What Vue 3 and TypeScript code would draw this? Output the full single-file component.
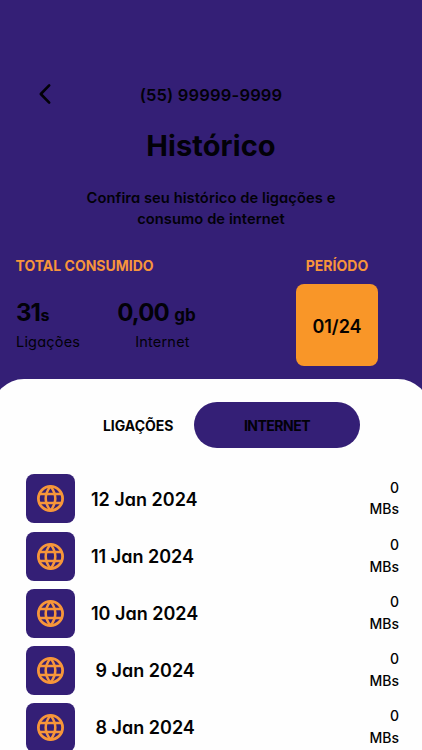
<script setup lang="ts">
interface UsageEntry {
  day: number
  month: string
  amount: number
  unit: string
}

const entries: UsageEntry[] = [12, 11, 10, 9, 8].map((day) => ({
  day,
  month: 'Jan 2024',
  amount: 0,
  unit: 'MBs',
}))

// Single-digit days keep a leading space so they sit under the two-digit ones.
const formatDate = (entry: UsageEntry): string =>
  `${String(entry.day).padStart(2, ' ')} ${entry.month}`
</script>

<template>
  <div class="screen">
    <header class="topbar">
      <button class="back" aria-label="Voltar">
        <svg width="14" height="22" viewBox="0 0 14 22">
          <path d="M11.2 2.4 2.8 11l8.4 8.6" fill="none" stroke="currentColor" stroke-width="2.6" stroke-linecap="round" stroke-linejoin="round" />
        </svg>
      </button>
      <span class="phone">(55) 99999-9999</span>
    </header>

    <h1 class="title">Histórico</h1>
    <p class="subtitle">Confira seu histórico de ligações e<br />consumo de internet</p>

    <section class="summary">
      <div class="totals">
        <h2 class="label">TOTAL CONSUMIDO</h2>
        <div class="stats">
          <div class="stat calls">
            <p class="value"><b>31</b><span>s</span></p>
            <p class="name">Ligações</p>
          </div>
          <div class="stat data">
            <p class="value"><b>0,00</b><span>gb</span></p>
            <p class="name">Internet</p>
          </div>
        </div>
      </div>
      <div class="period">
        <h2 class="label">PERÍODO</h2>
        <button class="month">01/24</button>
      </div>
    </section>

    <main class="sheet">
      <nav class="tabs">
        <button class="tab">LIGAÇÕES</button>
        <button class="tab active">INTERNET</button>
      </nav>
      <ul class="list">
        <li v-for="entry in entries" :key="entry.day" class="row">
          <span class="tile">
            <svg width="27" height="27" viewBox="0.5 0.5 27 27" fill="none" stroke="currentColor">
              <circle cx="14" cy="14" r="12.1" stroke-width="2.8" />
              <path d="M14 1.8Q4.4 14 14 26.2Q23.6 14 14 1.8Z" stroke-width="2.5" stroke-linejoin="round" />
              <path d="M2.8 9.5h22.4M2.8 18.5h22.4" stroke-width="2.5" />
            </svg>
          </span>
          <span class="date">{{ formatDate(entry) }}</span>
          <span class="amount">{{ entry.amount }}<br />{{ entry.unit }}</span>
        </li>
      </ul>
    </main>
  </div>
</template>

<style>
body {
  margin: 0;
  overflow: hidden;
}
</style>

<style scoped>
.screen {
  display: flex;
  flex-direction: column;
  box-sizing: border-box;
  width: 422px;
  height: 750px;
  padding-top: 80px;
  overflow: hidden;
  background: #341f76;
  color: #020108;
  font-family: Inter, 'Open Sans', sans-serif;
  font-feature-settings: 'cv11';
}

h1, h2, p, ul {
  margin: 0;
  padding: 0;
}

button {
  padding: 0;
  border: 0;
  background: none;
  color: inherit;
  font: inherit;
  font-feature-settings: inherit;
}

.topbar {
  display: grid;
  grid-template-columns: 102px 1fr 102px;
  align-items: center;
  flex: none;
  height: 30px;
}

.back {
  display: flex;
  padding-left: 38px;
  margin-top: -2px;
}

.phone {
  text-align: center;
  font-size: 16.5px;
  font-weight: 600;
  letter-spacing: 0.19px;
}

.title {
  flex: none;
  height: 40px;
  margin-top: 16px;
  line-height: 40px;
  text-align: center;
  font-size: 29px;
  font-weight: 650;
  letter-spacing: 0.1px;
}

.subtitle {
  flex: none;
  margin-top: 21.7px;
  line-height: 21.3px;
  text-align: center;
  font-size: 14.7px;
  font-weight: 600;
  letter-spacing: 0.07px;
}

.summary {
  display: flex;
  justify-content: space-between;
  flex: none;
  height: 123px;
  margin-top: 25.7px;
  padding: 0 44px 0 16px;
}

.label {
  height: 20px;
  line-height: 20px;
  color: #f7953b;
  font-size: 14px;
  font-weight: 700;
}

.totals .label {
  margin-left: -0.5px;
}

.stats {
  display: flex;
  gap: 37px;
  margin-top: 20px;
}

.value {
  display: flex;
  align-items: baseline;
  height: 34px;
  line-height: 34px;
}

.value b {
  font-size: 24px;
  font-weight: 700;
  letter-spacing: -0.9px;
}

.value span {
  font-size: 17px;
  font-weight: 700;
}

.calls .value span {
  margin-left: 0.5px;
  font-size: 16px;
}

.data .value span {
  margin-left: 5.5px;
}

.name {
  height: 24px;
  line-height: 24px;
  font-size: 14.5px;
  letter-spacing: 0.2px;
}

.data .name {
  padding-left: 18px;
}

.period {
  display: flex;
  flex-direction: column;
  align-items: center;
}

.month {
  width: 82px;
  height: 82px;
  margin-top: 8.5px;
  padding-top: 2px;
  border-radius: 8px;
  background: #f99628;
  color: #050200;
  font-size: 18px;
  font-weight: 600;
}

.sheet {
  flex: none;
  height: 420px;
  margin: 0 -8px;
  padding: 23.5px 31px 0 34px;
  border-radius: 32px 32px 0 0;
  background: #fefefe;
  color: #030303;
}

.tabs {
  display: flex;
  justify-content: flex-end;
  gap: 20.5px;
  padding-right: 39px;
}

.tab {
  height: 46px;
  padding-top: 1px;
  font-size: 14px;
  font-weight: 650;
}

.tab.active {
  width: 166px;
  border-radius: 23px;
  background: #341f76;
  color: #020108;
  font-weight: 700;
  letter-spacing: -0.5px;
}

.list {
  display: flex;
  flex-direction: column;
  gap: 8.1px;
  margin-top: 26px;
  list-style: none;
}

.row {
  display: flex;
  align-items: center;
  height: 49px;
}

.tile {
  display: flex;
  align-items: center;
  justify-content: center;
  width: 49px;
  height: 49px;
  border-radius: 8px;
  background: #341f76;
  color: #f7963a;
}

.tile svg {
  margin-right: 1px;
}

.date {
  margin-left: 16px;
  padding-top: 1px;
  white-space: pre;
  font-size: 18px;
  font-weight: 600;
}

.amount {
  margin-left: auto;
  padding-bottom: 1px;
  line-height: 21.5px;
  text-align: right;
  font-size: 14px;
  font-weight: 500;
}
</style>
